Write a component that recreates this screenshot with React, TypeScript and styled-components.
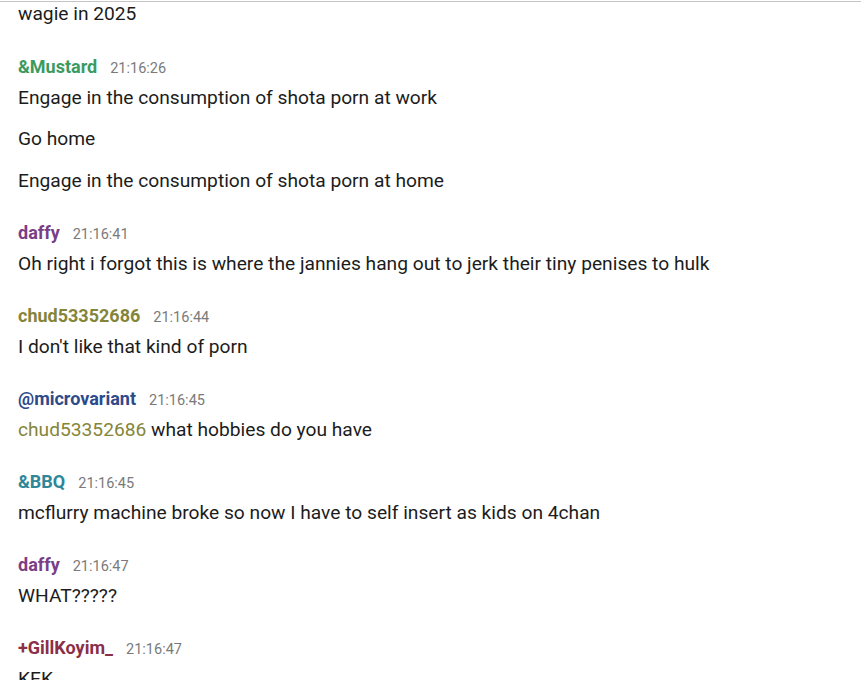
import React from 'react';
import styled, { createGlobalStyle } from 'styled-components';

const GlobalStyle = createGlobalStyle`
  html, body {
    margin: 0;
    padding: 0;
    background: #ffffff;
  }
  body {
    font-family: Roboto, "Noto Sans", "Liberation Sans", sans-serif;
    -webkit-font-smoothing: antialiased;
  }
`;

const Page = styled.div`
  padding-top: 1px;
  width: 861px;
  height: 679px;
  overflow: hidden;
`;

const Log = styled.div`
  border-top: 1px solid #c4c4c4;
  padding: 0 18px;
  display: flex;
  flex-direction: column;
  gap: 28px;
`;

const Group = styled.div`
  display: flex;
  flex-direction: column;
  gap: 17.5px;

  &:first-child {
    margin-bottom: 0.5px;
  }
`;

const Header = styled.div`
  display: flex;
  align-items: baseline;
  gap: 13px;
  line-height: 24px;
  margin-bottom: -12.5px;
`;

const Nick = styled.span<{ $color: string }>`
  font-weight: 700;
  font-size: 18px;
  color: ${({ $color }) => $color};
`;

const Time = styled.span`
  font-size: 14.5px;
  color: #7a7a7a;
`;

const Line = styled.div`
  font-size: 19.2px;
  line-height: 24px;
  color: #1c1c1c;
  white-space: nowrap;
`;

const Mention = styled.span<{ $color: string }>`
  color: ${({ $color }) => $color};
`;

const colors = {
  mustard: '#3c9a5f',
  daffy: '#7a3e87',
  chud: '#85853a',
  micro: '#2d4a8a',
  bbq: '#2e8798',
  gill: '#8a2f47',
};

type Msg = {
  nick?: string;
  color?: string;
  time?: string;
  lines: React.ReactNode[];
};

const messages: Msg[] = [
  { lines: ['wagie in 2025'] },
  {
    nick: '&Mustard',
    color: colors.mustard,
    time: '21:16:26',
    lines: [
      'Engage in the consumption of shota porn at work',
      'Go home',
      'Engage in the consumption of shota porn at home',
    ],
  },
  {
    nick: 'daffy',
    color: colors.daffy,
    time: '21:16:41',
    lines: ['Oh right i forgot this is where the jannies hang out to jerk their tiny penises to hulk'],
  },
  {
    nick: 'chud53352686',
    color: colors.chud,
    time: '21:16:44',
    lines: ["I don't like that kind of porn"],
  },
  {
    nick: '@microvariant',
    color: colors.micro,
    time: '21:16:45',
    lines: [
      <>
        <Mention $color={colors.chud}>chud53352686</Mention> what hobbies do you have
      </>,
    ],
  },
  {
    nick: '&BBQ',
    color: colors.bbq,
    time: '21:16:45',
    lines: ['mcflurry machine broke so now I have to self insert as kids on 4chan'],
  },
  {
    nick: 'daffy',
    color: colors.daffy,
    time: '21:16:47',
    lines: ['WHAT?????'],
  },
  {
    nick: '+GillKoyim_',
    color: colors.gill,
    time: '21:16:47',
    lines: ['KEK'],
  },
];

export default function App() {
  return (
    <Page>
      <GlobalStyle />
      <Log>
        {messages.map((m, i) => (
          <Group key={i}>
            {m.nick && (
              <Header>
                <Nick $color={m.color || '#000'}>{m.nick}</Nick>
                <Time>{m.time}</Time>
              </Header>
            )}
            {m.lines.map((l, j) => (
              <Line key={j}>{l}</Line>
            ))}
          </Group>
        ))}
      </Log>
    </Page>
  );
}
